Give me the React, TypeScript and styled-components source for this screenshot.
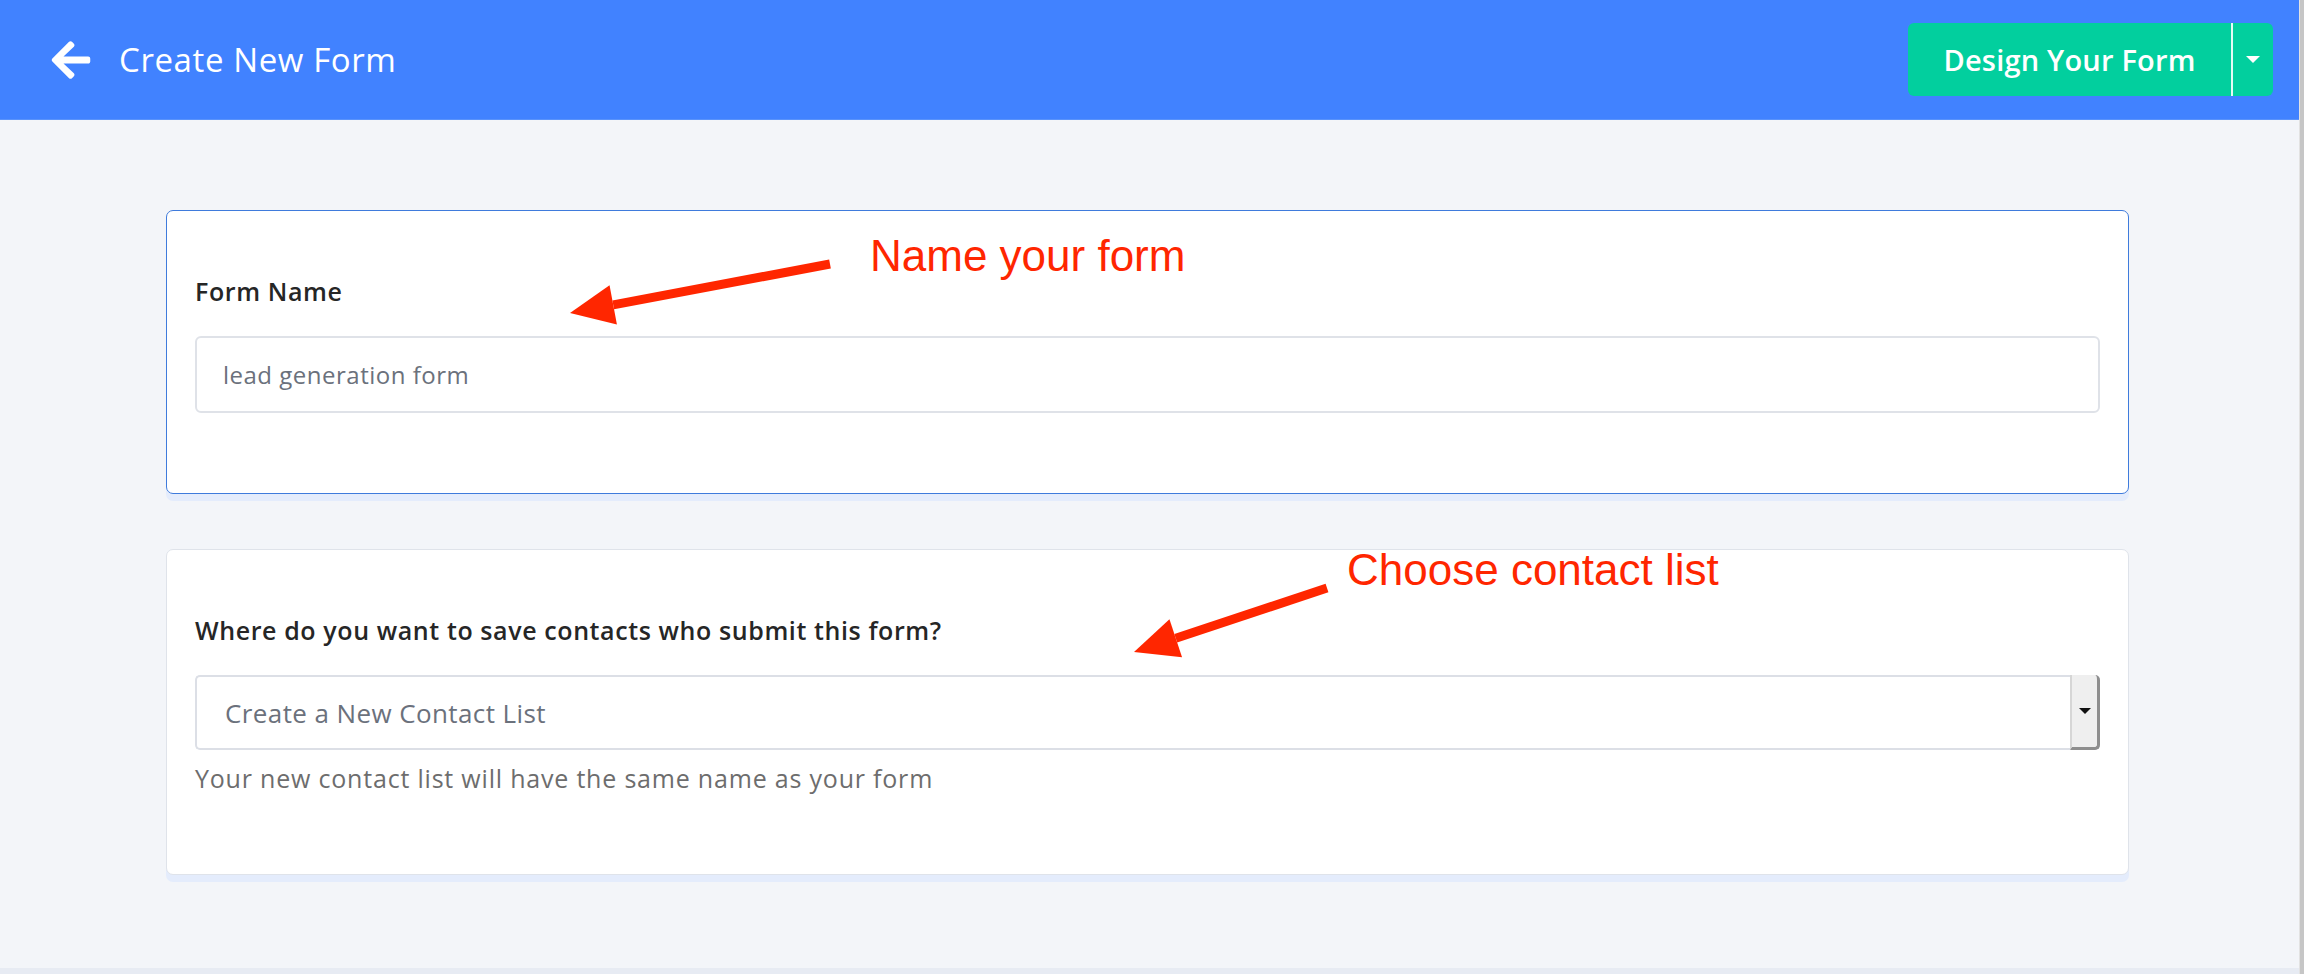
import styled, { createGlobalStyle } from "styled-components";
import { FaArrowLeft } from "react-icons/fa";

const GlobalStyle = createGlobalStyle`
  html, body {
    margin: 0;
    padding: 0;
  }

  body {
    background: #f3f5f9;
    font-family: "Open Sans", Roboto, sans-serif;
  }
`;

type Arrow = { x1: number; y1: number; x2: number; y2: number };

// annotation arrows, coordinates relative to Main
const arrows: Arrow[] = [
  { x1: 830, y1: 144, x2: 570, y2: 193 },
  { x1: 1327, y1: 468, x2: 1134, y2: 532 },
];

function arrowHead(a: Arrow) {
  const dx = a.x2 - a.x1;
  const dy = a.y2 - a.y1;
  const len = Math.sqrt(dx * dx + dy * dy);
  const ux = dx / len;
  const uy = dy / len;
  const back = 44;
  const half = 20;
  const bx = a.x2 - ux * back;
  const by = a.y2 - uy * back;
  const p1 = `${a.x2},${a.y2}`;
  const p2 = `${bx - uy * half},${by + ux * half}`;
  const p3 = `${bx + uy * half},${by - ux * half}`;
  return { points: `${p1} ${p2} ${p3}`, bx, by };
}

export default function App() {
  return (
    <>
      <GlobalStyle />
      <Screen>
        <Page>
          <Header>
            <HeaderLeft>
              <BackButton>
                <FaArrowLeft />
              </BackButton>
              <Title>Create New Form</Title>
            </HeaderLeft>
            <SplitButton>
              <MainAction>Design Your Form</MainAction>
              <CaretAction>
                <Caret />
              </CaretAction>
            </SplitButton>
          </Header>

          <Main>
            <Card $active>
              <Label>Form Name</Label>
              <TextInput defaultValue="lead generation form" />
            </Card>

            <Card>
              <Label>Where do you want to save contacts who submit this form?</Label>
              <SelectBox>
                <SelectText>Create a New Contact List</SelectText>
                <SelectButton>
                  <SmallCaret />
                </SelectButton>
              </SelectBox>
              <HelpText>Your new contact list will have the same name as your form</HelpText>
            </Card>

            <Overlay width="2300" height="760">
              {arrows.map((a, i) => {
                const h = arrowHead(a);
                return (
                  <g key={i}>
                    <line x1={a.x1} y1={a.y1} x2={h.bx} y2={h.by} stroke="#ff2600" strokeWidth="9" />
                    <polygon points={h.points} fill="#ff2600" />
                  </g>
                );
              })}
            </Overlay>
            <Note $top={114} $left={870}>Name your form</Note>
            <Note $top={428} $left={1347}>Choose contact list</Note>
          </Main>

          <BottomBar />
        </Page>
        <ScrollStrip />
      </Screen>
    </>
  );
}

const Screen = styled.div`
  display: flex;
  width: 2304px;
  height: 974px;
  overflow: hidden;
`;

const Page = styled.div`
  display: flex;
  flex-direction: column;
  flex: 1;
  min-width: 0;
`;

const ScrollStrip = styled.div`
  width: 4px;
  background: #c6c6c6;
  border-left: 1px solid #e2e2e2;
`;

const Header = styled.header`
  display: flex;
  align-items: center;
  justify-content: space-between;
  height: 119px;
  flex-shrink: 0;
  padding: 0 26px 0 49px;
  background: #4182ff;
  border-bottom: 1px solid #5a93fb;
`;

const HeaderLeft = styled.div`
  display: flex;
  align-items: center;
  gap: 26px;
`;

const BackButton = styled.div`
  display: flex;
  color: #fff;
  font-size: 44px;
`;

const Title = styled.h1`
  margin: 0;
  color: #fff;
  font-weight: 400;
  font-size: 33px;
  letter-spacing: 0.6px;
`;

const SplitButton = styled.div`
  display: flex;
  height: 73px;
  border-radius: 6px;
  overflow: hidden;
  background: #02cf9e;
`;

const MainAction = styled.button`
  display: flex;
  align-items: center;
  justify-content: center;
  width: 325px;
  border: none;
  border-right: 2px solid #e6fbf5;
  background: transparent;
  color: #fff;
  font-family: "Open Sans", Roboto, sans-serif;
  font-size: 29px;
  font-weight: 600;
  letter-spacing: 0.2px;
  cursor: pointer;
`;

const CaretAction = styled.button`
  display: flex;
  align-items: center;
  justify-content: center;
  width: 40px;
  border: none;
  background: transparent;
  cursor: pointer;
`;

const Caret = styled.span`
  width: 0;
  height: 0;
  border-left: 7px solid transparent;
  border-right: 7px solid transparent;
  border-top: 7px solid #fff;
`;

const Main = styled.main`
  position: relative;
  flex: 1;
  display: flex;
  flex-direction: column;
  gap: 55px;
  padding: 90px 170px 0 166px;
`;

const Card = styled.section<{ $active?: boolean }>`
  display: flex;
  flex-direction: column;
  padding: 64px 28px 80px;
  background: #fff;
  border: ${(p) => (p.$active ? "1.5px solid #3f7bdc" : "1px solid #dfe3ea")};
  border-radius: 7px;
  box-shadow: 0 7px 0 0 #e4ecfc;
`;

const Label = styled.label`
  color: #262626;
  font-size: 25px;
  font-weight: 600;
  line-height: 32px;
  letter-spacing: 0.6px;
  margin-bottom: 29px;
`;

const TextInput = styled.input`
  height: 77px;
  box-sizing: border-box;
  padding: 0 26px;
  border: 2px solid #dfe2e8;
  border-radius: 6px;
  background: #fff;
  color: #6b717c;
  font-family: "Open Sans", Roboto, sans-serif;
  font-size: 24px;
  letter-spacing: 0.5px;
  outline: none;
`;

const SelectBox = styled.div`
  display: flex;
  height: 75px;
  box-sizing: border-box;
  border: 2px solid #dcdfe6;
  border-right: none;
  border-radius: 5px;
  background: #fff;
`;

const SelectText = styled.div`
  flex: 1;
  display: flex;
  align-items: center;
  padding-left: 28px;
  color: #6b717c;
  font-size: 26px;
  letter-spacing: 0.4px;
`;

const SelectButton = styled.div`
  display: flex;
  align-items: center;
  justify-content: center;
  width: 25px;
  margin: -2px 0;
  background: #efefef;
  border-left: 2px solid #d6d6d6;
  border-right: 3px solid #8e8e8e;
  border-bottom: 3px solid #8e8e8e;
  border-radius: 0 5px 5px 0;
`;

const SmallCaret = styled.span`
  width: 0;
  height: 0;
  border-left: 6px solid transparent;
  border-right: 6px solid transparent;
  border-top: 6px solid #111;
`;

const HelpText = styled.p`
  margin: 12px 0 0;
  color: #6d6d6d;
  font-size: 25px;
  line-height: 32px;
  letter-spacing: 0.8px;
`;

const Overlay = styled.svg`
  position: absolute;
  top: 0;
  left: 0;
  pointer-events: none;
`;

const Note = styled.div<{ $top: number; $left: number }>`
  position: absolute;
  top: ${(p) => p.$top}px;
  left: ${(p) => p.$left}px;
  color: #ff2600;
  font-family: "Liberation Sans", Arial, sans-serif;
  font-size: 44px;
  line-height: 1;
  white-space: nowrap;
`;

const BottomBar = styled.div`
  height: 6px;
  background: #e7ebf3;
`;
